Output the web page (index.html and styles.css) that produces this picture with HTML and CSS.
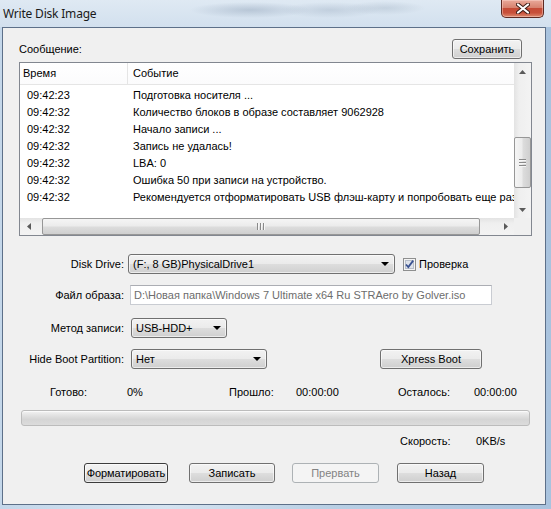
FILE: index.html
```html
<!DOCTYPE html>
<html lang="ru">
<head>
<meta charset="utf-8">
<title>Write Disk Image</title>
<link rel="stylesheet" href="styles.css">
</head>
<body>
<div class="window">
  <div class="titlebar">
    <span class="title">Write Disk Image</span>
    <div class="close">
      <svg width="14" height="11" viewBox="0 0 14 11"><path d="M2 1.5 L12 9.5 M12 1.5 L2 9.5" stroke="#3b1a14" stroke-width="4" stroke-linecap="round"/><path d="M2 1.5 L12 9.5 M12 1.5 L2 9.5" stroke="#ffffff" stroke-width="2.2" stroke-linecap="round"/></svg>
    </div>
  </div>
  <div class="client">
    <div class="msg-head">
      <span>Сообщение:</span>
      <div class="btn save">Сохранить</div>
    </div>
    <div class="listview">
      <div class="lv-main">
        <div class="lv-header">
          <div class="hcell htime">Время</div>
          <div class="hcell hevent">Событие</div>
        </div>
        <div class="lv-rows">
          <div class="row"><span class="t">09:42:23</span><span class="e">Подготовка носителя ...</span></div>
          <div class="row"><span class="t">09:42:32</span><span class="e">Количество блоков в образе составляет 9062928</span></div>
          <div class="row"><span class="t">09:42:32</span><span class="e">Начало записи ...</span></div>
          <div class="row"><span class="t">09:42:32</span><span class="e">Запись не удалась!</span></div>
          <div class="row"><span class="t">09:42:32</span><span class="e">LBA: 0</span></div>
          <div class="row"><span class="t">09:42:32</span><span class="e">Ошибка 50 при записи на устройство.</span></div>
          <div class="row"><span class="t">09:42:32</span><span class="e">Рекомендуется отформатировать USB флэш-карту и попробовать еще раз</span></div>
        </div>
      </div>
      <div class="vscroll">
        <div class="sbtn"><svg width="7" height="4" viewBox="0 0 7 4"><polygon points="0,4 3.5,0 7,4" fill="#5a5a5a"/></svg></div>
        <div class="vtrack"><div class="vthumb"><span class="grip-h"></span><span class="grip-h"></span><span class="grip-h"></span></div></div>
        <div class="sbtn"><svg width="7" height="4" viewBox="0 0 7 4"><polygon points="0,0 7,0 3.5,4" fill="#5a5a5a"/></svg></div>
      </div>
      <div class="hscroll">
        <div class="sbtn"><svg width="4" height="7" viewBox="0 0 4 7"><polygon points="4,0 4,7 0,3.5" fill="#5a5a5a"/></svg></div>
        <div class="htrack"><div class="hthumb"><span class="grip-v"></span><span class="grip-v"></span><span class="grip-v"></span></div></div>
        <div class="sbtn"><svg width="4" height="7" viewBox="0 0 4 7"><polygon points="0,0 4,3.5 0,7" fill="#5a5a5a"/></svg></div>
      </div>
      <div class="corner"></div>
    </div>

    <div class="frow r1">
      <span class="lbl">Disk Drive:</span>
      <div class="combo c-drive"><span>(F:, 8 GB)PhysicalDrive1</span><i class="arrow"></i></div>
      <div class="check">
        <svg width="13" height="13" viewBox="0 0 13 13"><rect x="0.5" y="0.5" width="12" height="12" fill="#f4f4f4" stroke="#8e8f8f"/><rect x="2.5" y="2.5" width="8" height="8" fill="#dfe3ea" stroke="#b7bec9"/><path d="M3 6.5 L5.3 9 L10.2 2.6" fill="none" stroke="#3a5291" stroke-width="1.8"/></svg>
        <span>Проверка</span>
      </div>
    </div>
    <div class="frow r2">
      <span class="lbl">Файл образа:</span>
      <div class="field">D:\Новая папка\Windows 7 Ultimate x64 Ru STRAero by Golver.iso</div>
    </div>
    <div class="frow r3">
      <span class="lbl">Метод записи:</span>
      <div class="combo c-method"><span>USB-HDD+</span><i class="arrow"></i></div>
    </div>
    <div class="frow r4">
      <span class="lbl">Hide Boot Partition:</span>
      <div class="combo c-hide"><span>Нет</span><i class="arrow"></i></div>
      <div class="btn xpress">Xpress Boot</div>
    </div>

    <div class="stats">
      <span class="s1">Готово:</span>
      <span class="s2">0%</span>
      <span class="s3">Прошло:</span>
      <span class="s4">00:00:00</span>
      <span class="s5">Осталось:</span>
      <span class="s6">00:00:00</span>
    </div>
    <div class="progress"></div>
    <div class="speed">
      <span class="sp1">Скорость:</span>
      <span>0KB/s</span>
    </div>
    <div class="actions">
      <div class="btn b-format">Форматировать</div>
      <div class="btn b-write">Записать</div>
      <div class="btn b-abort disabled">Прервать</div>
      <div class="btn b-back">Назад</div>
    </div>
  </div>
</div>
</body>
</html>
```
FILE: styles.css
```css
* { box-sizing: border-box; }
html, body { margin: 0; padding: 0; }
body {
  width: 551px; height: 509px; overflow: hidden;
  font-family: "Liberation Sans", Arial, sans-serif;
  font-size: 11px; color: #000;
}
.window {
  width: 551px; height: 509px;
  display: flex; flex-direction: column;
  background: linear-gradient(to right, #c4d7ea 0%, #d5e3f0 30%, #b9cfe4 60%, #a9c3de 100%);
}
.titlebar {
  height: 27px; position: relative;
  display: flex; align-items: center; padding-left: 3px; padding-bottom: 1px;
  background:
    radial-gradient(ellipse 60px 8px at 250px 10px, rgba(120,140,165,0.35), transparent),
    radial-gradient(ellipse 50px 8px at 330px 10px, rgba(120,140,165,0.25), transparent),
    radial-gradient(ellipse 40px 7px at 385px 8px, rgba(130,150,170,0.25), transparent),
    linear-gradient(to bottom, #dfe9f3 0%, #d2e0ee 100%);
}
.title { font-family: "Noto Sans", "Open Sans", sans-serif; font-size: 12px; color: #1a1a1a; letter-spacing: -0.2px; }
.close {
  position: absolute; right: 7px; top: 0;
  width: 43px; height: 18px;
  border: 1px solid #5e2a22; border-top: none;
  border-radius: 0 0 5px 5px;
  background: linear-gradient(to bottom, #e9a99a 0%, #d7826f 45%, #c54b36 50%, #c8503a 75%, #dc8a6f 100%);
  display: flex; align-items: center; justify-content: center;
  box-shadow: inset 0 0 0 1px rgba(255,220,210,0.45);
}
.client {
  margin-left: 2px; width: 544px; height: 478px;
  border: 1px solid #5d7089;
  background: #f0f0f0;
  padding: 11px 0 0 16px;
}
.msg-head {
  width: 503px; height: 20px;
  display: flex; justify-content: space-between; align-items: center;
}
.btn {
  height: 20px;
  border: 1px solid #707070; border-radius: 3px;
  background: linear-gradient(to bottom, #f2f2f2 0%, #ebebeb 48%, #dddddd 52%, #cfcfcf 100%);
  box-shadow: inset 0 0 0 1px rgba(255,255,255,0.6);
  display: flex; align-items: center; justify-content: center;
  white-space: nowrap; overflow: hidden;
}
.btn.save { width: 70px; }
.btn.disabled {
  border-color: #adb2b5; background: #f4f4f4; color: #838383; box-shadow: none;
}

/* list view */
.listview {
  margin-top: 3px; width: 513px; height: 174px;
  border: 1px solid #828790; background: #fff;
  display: grid; grid-template-columns: 1fr 17px; grid-template-rows: 1fr 17px;
}
.lv-main { overflow: hidden; white-space: nowrap; }
.lv-header {
  height: 22px; display: flex;
  border-bottom: 1px solid #e5e5e5;
  background: linear-gradient(to bottom, #ffffff, #fbfbfc);
}
.hcell { line-height: 21px; }
.htime { width: 108px; padding-left: 3px; border-right: 1px solid #e5e5e5; }
.hevent { padding-left: 5px; }
.lv-rows { padding-top: 2px; }
.row { height: 17px; line-height: 17px; display: flex; }
.row .t { width: 108px; flex: none; padding-left: 7px; }
.row .e { padding-left: 5px; }

.vscroll {
  display: flex; flex-direction: column;
  background: linear-gradient(to right, #e3e3e3 0%, #efefef 30%, #f3f3f3 100%);
}
.sbtn { width: 17px; height: 17px; flex: none; display: flex; align-items: center; justify-content: center; }
.vtrack { flex: 1; }
.vthumb {
  margin-top: 57px; margin-left: 0; width: 17px; height: 51px;
  border: 1px solid #979797; border-radius: 2px;
  background: linear-gradient(to right, #f5f5f5 0%, #ececec 45%, #dcdcdc 55%, #cfcfcf 100%);
  display: flex; flex-direction: column; align-items: center; justify-content: center; gap: 1px;
}
.grip-h { width: 7px; height: 1px; background: #8a8a8a; box-shadow: 0 1px 0 #f6f6f6; margin-bottom: 1px; }
.hscroll {
  display: flex;
  background: linear-gradient(to bottom, #e3e3e3 0%, #efefef 30%, #f3f3f3 100%);
}
.htrack { flex: 1; }
.hthumb {
  margin-left: 5px; width: 438px; height: 17px;
  border: 1px solid #979797; border-radius: 2px;
  background: linear-gradient(to bottom, #f5f5f5 0%, #ececec 45%, #dcdcdc 55%, #cfcfcf 100%);
  display: flex; align-items: center; justify-content: center; gap: 1px;
}
.grip-v { width: 1px; height: 7px; background: #8a8a8a; box-shadow: 1px 0 0 #f6f6f6; margin-right: 1px; }
.corner { background: #f0f0f0; }

/* form */
.frow { display: flex; align-items: center; height: 20px; }
.r1 { margin-top: 18px; }
.r2 { margin-top: 11px; }
.r3 { margin-top: 13px; }
.r4 { margin-top: 11px; }
.lbl { width: 105px; text-align: right; flex: none; }
.combo {
  height: 20px; position: relative;
  border: 1px solid #707070; border-radius: 3px;
  background: linear-gradient(to bottom, #f2f2f2 0%, #ebebeb 48%, #dddddd 52%, #cfcfcf 100%);
  box-shadow: inset 0 0 0 1px rgba(255,255,255,0.6);
  display: flex; align-items: center; padding-left: 4px;
}
.arrow {
  position: absolute; right: 5px; top: 7px;
  width: 0; height: 0;
  border-left: 4px solid transparent; border-right: 4px solid transparent; border-top: 4px solid #000;
}
.c-drive { margin-left: 4px; width: 267px; }
.c-method { margin-left: 7px; width: 96px; }
.c-hide { margin-left: 7px; width: 136px; }
.check { display: flex; align-items: center; margin-left: 8px; gap: 3px; }
.check svg { display: block; }
.field {
  margin-left: 6px; width: 362px; height: 20px;
  border: 1px solid #c9ccd2; border-top-color: #abadb3;
  background: #fff; color: #6d6d6d;
  display: flex; align-items: center; padding-left: 3px;
  white-space: nowrap; overflow: hidden;
}
.btn.xpress { margin-left: 113px; width: 102px; }

.stats { margin-top: 16px; height: 14px; display: flex; align-items: center; padding-left: 31px; }
.stats span { flex: none; }
.s1 { width: 77px; }
.s2 { width: 102px; }
.s3 { width: 67px; }
.s4 { width: 102px; }
.s5 { width: 76px; }
.progress {
  margin-top: 11px; margin-left: 2px; width: 509px; height: 16px;
  border: 1px solid #bcbcbc; border-radius: 3px;
  background: linear-gradient(to bottom, #f3f3f3 0%, #e3e3e3 30%, #d5d5d5 60%, #dcdcdc 100%);
  box-shadow: inset 0 1px 0 #fafafa;
}
.speed { margin-top: 8px; height: 14px; display: flex; align-items: center; padding-left: 381px; }
.sp1 { width: 76px; }
.actions { margin-top: 15px; display: flex; padding-left: 65px; }
.b-format { width: 84px; border-color: #3c3c3c; letter-spacing: -0.1px; }
.b-write { width: 86px; margin-left: 21px; }
.b-abort { width: 87px; margin-left: 17px; }
.b-back { width: 87px; margin-left: 18px; }
```
